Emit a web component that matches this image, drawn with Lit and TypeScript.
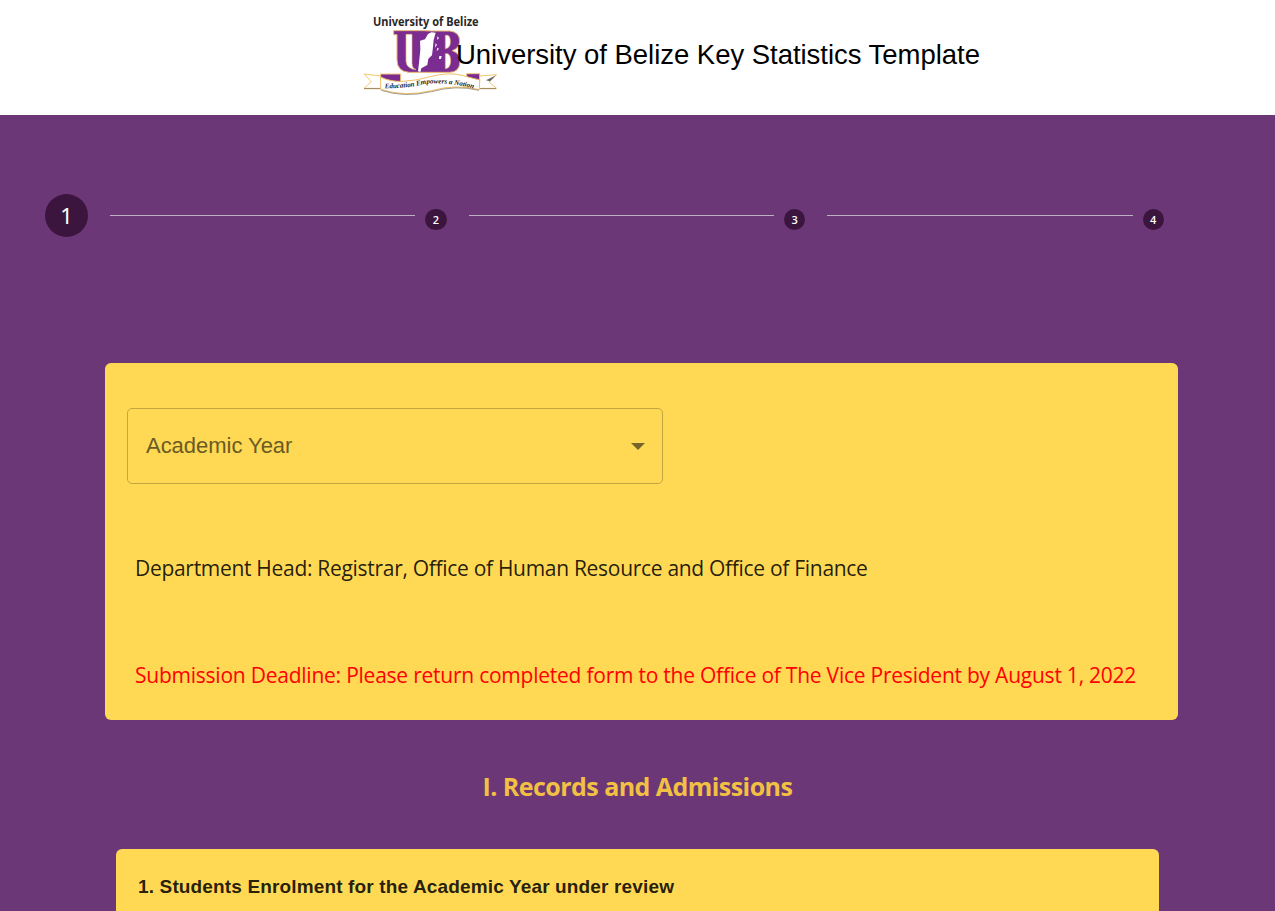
import { LitElement, html, css } from "lit";
import { customElement } from "lit/decorators.js";

@customElement("ub-logo")
class UbLogo extends LitElement {
  static styles = css`
    :host { display: block; width: 160px; height: 100px; }
    svg { display: block; }
    .name { font: 700 36px "Noto Sans", "Open Sans", sans-serif; fill: #2a2729; }
    .motto { font: italic bold 21px "Liberation Serif", serif; fill: #222; }
  `;
  render() {
    return html`<svg width="160" height="100" viewBox="0 0 480 300">
      <text class="name" x="69" y="63" textLength="317" lengthAdjust="spacingAndGlyphs">University of Belize</text>
      <path d="M131 77H222L244 78H299Q329 81 329 108Q329 129 307 137Q332 145 330 171Q328 202 298 202H177Q141 199 141 164V89H131Z" fill="#7b2c90" stroke="#e9b573" stroke-width="3"/>
      <path d="M168 88H186V176Q186 190 198 194Q170 192 168 169Z" fill="#fff" stroke="#e9b573" stroke-width="2"/>
      <path d="M286 91H293Q301 93 301 111Q301 129 286 131ZM286 146H293Q302 149 302 169Q301 190 286 191Z" fill="#fff" stroke="#e9b573" stroke-width="2"/>
      <path d="M210 107L225 103L234 87L244 82L257 83L251 104L249 126L246 151L235 161L232 180L214 190L211 201L204 199L207 174L211 134Z" fill="#fff"/>
      <path d="M262 94l5 5-5 6zM257 115l4 4-6 9zM262 128l5 3-7 8zM268 153h7l-2 9h-6z" fill="#fff"/>
      <path d="M95 213L43 207L64 230L42 250H102L94 236ZM387 213L440 209L417 231L440 250H379L388 232Z" fill="#fff" stroke="#f1c96b" stroke-width="3"/>
      <path d="M42 251H96M385 251H438" stroke="#9a805a" stroke-width="3"/>
      <path d="M408 226L438 211L420 229Z" fill="#67616b"/>
      <path d="M92 207H152V232H92ZM350 206H389V232H350Z" fill="#7b2c90" stroke="#efc779" stroke-width="3"/>
      <path d="M92 216Q122 231 160 229Q200 227 245 214Q298 200 340 212Q368 220 389 225L388 254Q319 236 244 257Q164 277 92 253Z" fill="#fff" stroke="#efc066" stroke-width="3"/>
      <path d="M94 256Q164 279 244 260Q319 239 387 256" fill="none" stroke="#786c58" stroke-width="2"/>
      <path id="motto" d="M104 250Q165 251 225 237Q302 230 374 252" fill="none"/>
      <text class="motto"><textPath href="#motto" textLength="269" lengthAdjust="spacingAndGlyphs">Education Empowers a Nation</textPath></text>
    </svg>`;
  }
}

@customElement("app-root")
class AppRoot extends LitElement {
  static styles = css`
    :host { display: block; height: 911px; overflow: hidden; background: #6c3777; font-family: "Liberation Sans", Arial, sans-serif; color: rgba(0,0,0,.87); }
    * { box-sizing: border-box; }
    header { height: 115px; background: #fff; display: flex; align-items: flex-start; padding: 5px 0 0 350px; }
    h1 { margin: 34px 0 0 -54px; font-size: 27.5px; line-height: 32px; font-weight: 400; letter-spacing: -.03px; color: #000; white-space: nowrap; position: relative; }
    .steps { height: 248px; padding: 79px 111px 0 45px; display: flex; align-items: flex-start; }
    .dot { flex: none; width: 21.5px; height: 21.5px; margin-top: 14.5px; border-radius: 50%; background: #3c153f; color: #fff; font-size: 11px; display: flex; align-items: center; justify-content: center; font-family: "Open Sans", sans-serif; font-weight: 600; }
    .dot.active { width: 43px; height: 43px; margin: 0 12px 0 0; padding-bottom: 2px; font-size: 22px; font-weight: 400; font-family: "Noto Sans", sans-serif; }
    .line { flex: 1; height: 1px; margin: 21px 10px 0 22px; background: #bdaec1; }
    .dot.active + .line { margin-left: 10px; }
    .card { margin: 0 97px 0 105px; height: 357px; border-radius: 6px; background: #ffd854; padding: 45px 22px 0; }
    .select { width: 536px; height: 76px; border: 1px solid #c4a640; border-radius: 5px; display: flex; align-items: center; justify-content: space-between; padding: 0 17px 0 18px; color: #6b5b23; font-size: 22px; }
    .label { letter-spacing: -.03px; margin-top: -1px; }
    .info { margin: 69px 0 0 8px; font: 400 21px/30px "Open Sans", "Noto Sans", sans-serif; white-space: nowrap; }
    .due { margin-top: 77px; color: #f00; }
    .dept { letter-spacing: -.3px; }
    .deadline { letter-spacing: -.235px; }
    h2 { margin: 48px 0 0; text-align: center; font: 700 25px/36px "Open Sans", "Noto Sans", sans-serif; color: #f2c144; }
    .sec { letter-spacing: -.55px; }
    .panel { margin: 45px 116px 0; height: 80px; border-radius: 6px; background: #ffd854; padding: 26px 22px 0; font-weight: 700; font-size: 19px; line-height: 23px; }
    .q { letter-spacing: .145px; }
  `;
  render() {
    return html`
      <header><ub-logo></ub-logo><h1>University of Belize Key Statistics Template</h1></header>
      <nav class="steps">
        <div class="dot active">1</div>
        ${[2, 3, 4].map((n) => html`<div class="line"></div><div class="dot">${n}</div>`)}
      </nav>
      <section class="card">
        <div class="select"><span class="label">Academic Year</span><svg width="14" height="7" viewBox="0 0 14 7"><path d="M0 0h14L7 7z" fill="#75652b"/></svg></div>
        <div class="info"><span class="dept">Department Head: Registrar, Office of Human Resource and Office of Finance</span></div>
        <div class="info due"><span class="deadline">Submission Deadline: Please return completed form to the Office of The Vice President by August 1, 2022</span></div>
      </section>
      <h2><span class="sec">I. Records and Admissions</span></h2>
      <section class="panel"><span class="q">1. Students Enrolment for the Academic Year under review</span></section>
    `;
  }
}
